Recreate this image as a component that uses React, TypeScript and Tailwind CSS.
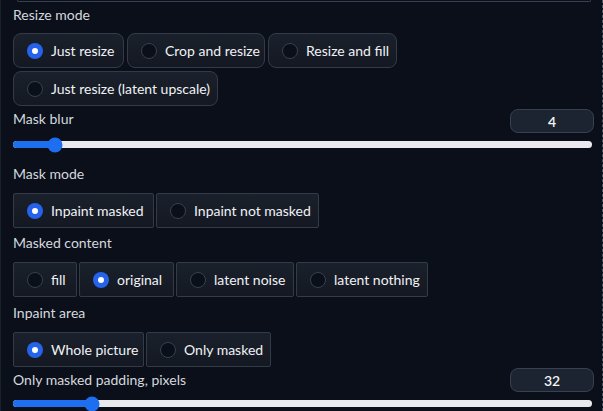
import React from "react";

type Opt = { label: string; w: string };

const resizeModes: Opt[] = [
  { label: "Just resize", w: "w-[111px]" },
  { label: "Crop and resize", w: "w-[138px]" },
  { label: "Resize and fill", w: "w-[129px]" },
  { label: "Just resize (latent upscale)", w: "w-[205px]" },
];

const maskModes: Opt[] = [
  { label: "Inpaint masked", w: "w-[141px]" },
  { label: "Inpaint not masked", w: "w-[163px]" },
];

const maskedContent: Opt[] = [
  { label: "fill", w: "w-[64px]" },
  { label: "original", w: "w-[95px]" },
  { label: "latent noise", w: "w-[118px]" },
  { label: "latent nothing", w: "w-[132px]" },
];

const inpaintArea: Opt[] = [
  { label: "Whole picture", w: "w-[131px]" },
  { label: "Only masked", w: "w-[125px]" },
];

const Radio = ({ on }: { on: boolean }) =>
  on ? (
    <span className="flex h-4 w-4 shrink-0 items-center justify-center rounded-full bg-[#2563eb]">
      <span className="h-[6px] w-[6px] rounded-full bg-white" />
    </span>
  ) : (
    <span className="h-4 w-4 shrink-0 rounded-full border border-[#374151] bg-[#0b0f19]" />
  );

const Label = ({ text, className = "" }: { text: string; className?: string }) => (
  <div className={`h-5 text-[14px] leading-5 text-[#d4d8de] ${className}`}>{text}</div>
);

const RadioGroup = ({
  options,
  selected,
  rounded,
  className = "",
}: {
  options: Opt[];
  selected: number;
  rounded?: boolean;
  className?: string;
}) => (
  <div className={`flex flex-wrap ${rounded ? "gap-[3px]" : "gap-[2px]"} ${className}`}>
    {options.map((o, i) => (
      <div
        key={o.label}
        className={`${o.w} flex h-[35px] items-center gap-2 border border-[#343b48] bg-gradient-to-b from-[#1b212c] to-[#131822] pl-[13px] text-[14px] text-[#f0f2f5] ${
          rounded ? "rounded-lg" : "rounded-[2px]"
        }`}
      >
        <Radio on={i === selected} />
        <span className="whitespace-nowrap">{o.label}</span>
      </div>
    ))}
  </div>
);

const NumberBox = ({ value }: { value: number }) => (
  <div className="flex h-6 w-[84px] items-center justify-center rounded-lg border border-[#374151] bg-[#1d2431] text-[14px] font-semibold text-[#f3f4f6]">
    {value}
  </div>
);

const Slider = ({ pos, className = "" }: { pos: number; className?: string }) => (
  <div className={`relative mr-[9px] h-[7px] rounded-full bg-[#e8eaee] ${className}`}>
    <div className="h-full rounded-full bg-[#1e6ff0]" style={{ width: pos }} />
    <div
      className="absolute top-1/2 h-[15px] w-[15px] -translate-x-1/2 -translate-y-1/2 rounded-full bg-[#1e6ff0]"
      style={{ left: pos }}
    />
  </div>
);

export default function App() {
  return (
    <div className="flex h-[411px] w-[603px] overflow-hidden bg-[#0b0f19] font-['Lato',sans-serif]">
      <div className="flex-1 border-l border-[#1a202c] pl-[12px]">
        <div className="ml-[4px] mr-[10px] h-[2px] rounded-b-md border-x border-b border-[#374151]" />
        <Label text="Resize mode" className="mt-[3px]" />
        <RadioGroup options={resizeModes} selected={0} rounded className="mt-[8px]" />

        <div className="mt-[3px] flex items-start justify-between pr-[7px]">
          <Label text="Mask blur" />
          <NumberBox value={4} />
        </div>
        <Slider pos={42} className="mt-[8px]" />

        <Label text="Mask mode" className="mt-[16px]" />
        <RadioGroup options={maskModes} selected={0} className="mt-[9px]" />

        <Label text="Masked content" className="mt-[5px]" />
        <RadioGroup options={maskedContent} selected={1} className="mt-[9px]" />

        <Label text="Inpaint area" className="mt-[6px]" />
        <RadioGroup options={inpaintArea} selected={0} className="mt-[9px]" />

        <div className="mt-[1px] flex items-start justify-between pr-[7px]">
          <Label text="Only masked padding, pixels" className="mt-[2px]" />
          <NumberBox value={32} />
        </div>
        <Slider pos={79} className="mt-[8px]" />
      </div>
      <div className="w-[2px] border-r border-dashed border-[#4b5563]" />
    </div>
  );
}
